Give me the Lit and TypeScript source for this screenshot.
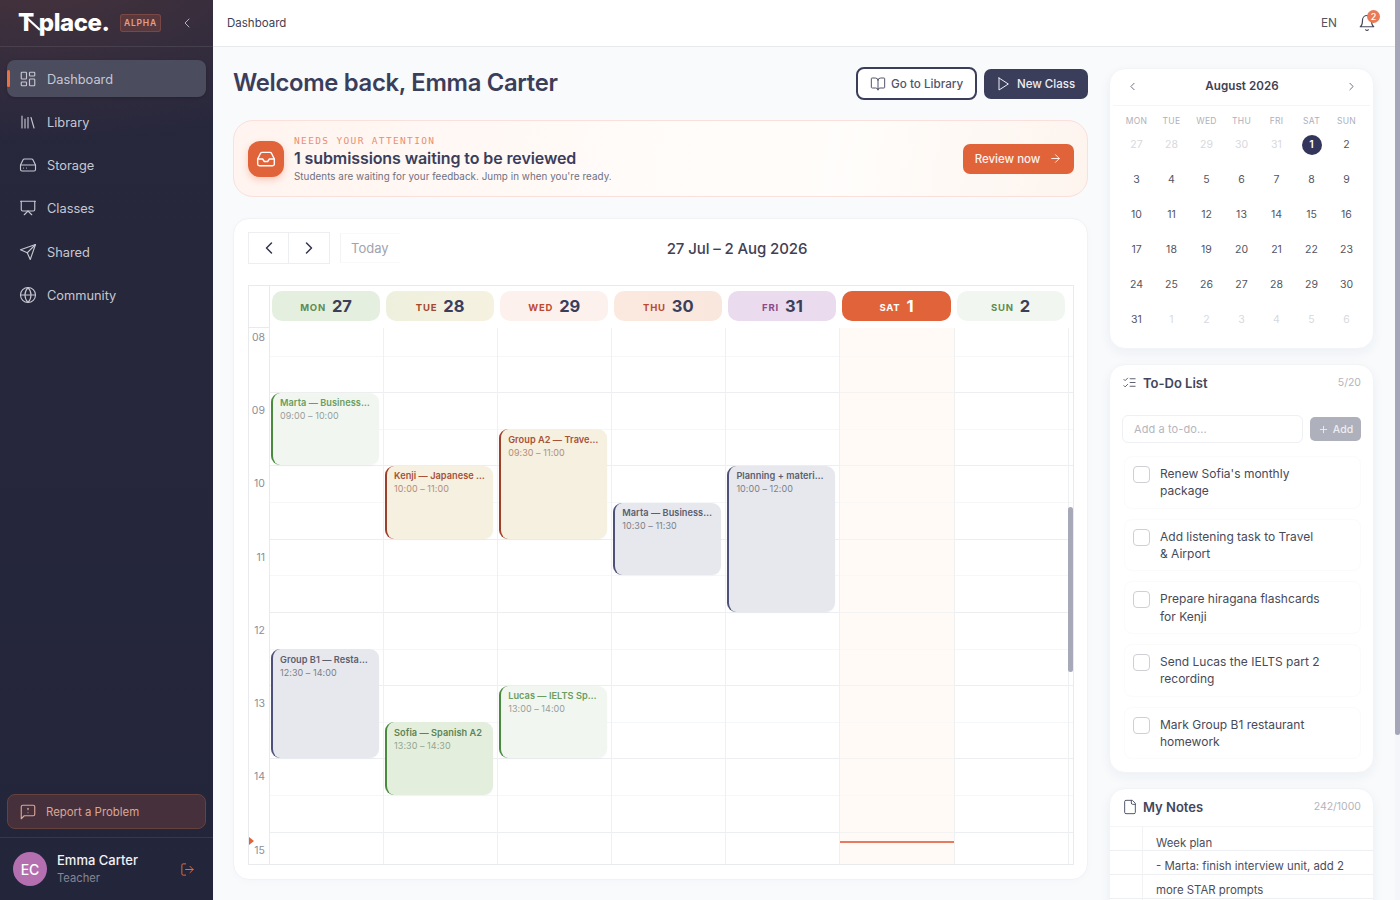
import { LitElement, html, css, svg, nothing } from "lit";
import { customElement } from "lit/decorators.js";

const I = {
  dash: svg`<rect x="3" y="3" width="7" height="9" rx="1"/><rect x="14" y="3" width="7" height="5" rx="1"/><rect x="14" y="12" width="7" height="9" rx="1"/><rect x="3" y="16" width="7" height="5" rx="1"/>`,
  library: svg`<path d="m16 6 4 14"/><path d="M12 6v14"/><path d="M8 8v12"/><path d="M4 4v16"/>`,
  drive: svg`<line x1="22" y1="12" x2="2" y2="12"/><path d="M5.45 5.11 2 12v6a2 2 0 0 0 2 2h16a2 2 0 0 0 2-2v-6l-3.45-6.89A2 2 0 0 0 16.76 4H7.24a2 2 0 0 0-1.79 1.11z"/><line x1="6" y1="16" x2="6.01" y2="16"/><line x1="10" y1="16" x2="10.01" y2="16"/>`,
  present: svg`<path d="M2 3h20"/><path d="M21 3v11a2 2 0 0 1-2 2H5a2 2 0 0 1-2-2V3"/><path d="m7 21 5-5 5 5"/>`,
  send: svg`<path d="m22 2-7 20-4-9-9-4Z"/><path d="M22 2 11 13"/>`,
  globe: svg`<circle cx="12" cy="12" r="10"/><path d="M12 2a14.5 14.5 0 0 0 0 20 14.5 14.5 0 0 0 0-20"/><path d="M2 12h20"/>`,
  report: svg`<path d="M21 15a2 2 0 0 1-2 2H7l-4 4V5a2 2 0 0 1 2-2h14a2 2 0 0 1 2 2z"/><path d="M12 7v2"/><path d="M12 13h.01"/>`,
  logout: svg`<path d="M9 21H5a2 2 0 0 1-2-2V5a2 2 0 0 1 2-2h4"/><path d="m16 17 5-5-5-5"/><path d="M21 12H9"/>`,
  book: svg`<path d="M12 7v14"/><path d="M3 18a1 1 0 0 1-1-1V4a1 1 0 0 1 1-1h5a4 4 0 0 1 4 4 4 4 0 0 1 4-4h5a1 1 0 0 1 1 1v13a1 1 0 0 1-1 1h-6a3 3 0 0 0-3 3 3 3 0 0 0-3-3z"/>`,
  play: svg`<polygon points="6 3 20 12 6 21 6 3"/>`,
  inbox: svg`<polyline points="22 12 16 12 14 15 10 15 8 12 2 12"/><path d="M5.45 5.11 2 12v6a2 2 0 0 0 2 2h16a2 2 0 0 0 2-2v-6l-3.45-6.89A2 2 0 0 0 16.76 4H7.24a2 2 0 0 0-1.79 1.11z"/>`,
  arrow: svg`<path d="M5 12h14"/><path d="m12 5 7 7-7 7"/>`,
  bell: svg`<path d="M6 8a6 6 0 0 1 12 0c0 7 3 9 3 9H3s3-2 3-9"/><path d="M10.3 21a1.94 1.94 0 0 0 3.4 0"/>`,
  checks: svg`<path d="m3 17 2 2 4-4"/><path d="m3 7 2 2 4-4"/><path d="M13 6h8"/><path d="M13 12h8"/><path d="M13 18h8"/>`,
  file: svg`<path d="M15 2H6a2 2 0 0 0-2 2v16a2 2 0 0 0 2 2h12a2 2 0 0 0 2-2V7Z"/><path d="M14 2v4a2 2 0 0 0 2 2h4"/>`,
  plus: svg`<path d="M5 12h14"/><path d="M12 5v14"/>`,
  left: svg`<path d="m15 18-6-6 6-6"/>`,
  right: svg`<path d="m9 18 6-6-6-6"/>`,
};

const ic = (p: unknown, size: number, sw = 2) => html`<svg class="ic" width=${size} height=${size} viewBox="0 0 24 24" fill="none" stroke="currentColor" stroke-width=${sw} stroke-linecap="round" stroke-linejoin="round">${p}</svg>`;

const NAV = [
  ["Dashboard", I.dash, true],
  ["Library", I.library, false],
  ["Storage", I.drive, false],
  ["Classes", I.present, false],
  ["Shared", I.send, false],
  ["Community", I.globe, false],
] as const;

const DAYS = [
  { l: "MON", n: 27, c: "mon" },
  { l: "TUE", n: 28, c: "tue" },
  { l: "WED", n: 29, c: "wed" },
  { l: "THU", n: 30, c: "thu" },
  { l: "FRI", n: 31, c: "fri" },
  { l: "SAT", n: 1, c: "sat" },
  { l: "SUN", n: 2, c: "sun" },
];

const HALF = 36.62;
const EVENTS = [
  { d: 0, s: 9, e: 10, t: "Marta — Business English", time: "09:00 – 10:00", c: "green" },
  { d: 1, s: 10, e: 11, t: "Kenji — Japanese N4 review", time: "10:00 – 11:00", c: "sand" },
  { d: 2, s: 9.5, e: 11, t: "Group A2 — Travel & Airport", time: "09:30 – 11:00", c: "sand" },
  { d: 3, s: 10.5, e: 11.5, t: "Marta — Business English", time: "10:30 – 11:30", c: "slate" },
  { d: 4, s: 10, e: 12, t: "Planning + materials review", time: "10:00 – 12:00", c: "slate" },
  { d: 0, s: 12.5, e: 14, t: "Group B1 — Restaurant", time: "12:30 – 14:00", c: "slate" },
  { d: 1, s: 13.5, e: 14.5, t: "Sofia — Spanish A2", time: "13:30 – 14:30", c: "fresh" },
  { d: 2, s: 13, e: 14, t: "Lucas — IELTS Speaking", time: "13:00 – 14:00", c: "green" },
];

const HOURS = ["08", "09", "10", "11", "12", "13", "14", "15"];
const WEEK = ["MON", "TUE", "WED", "THU", "FRI", "SAT", "SUN"];
const MONTH: [number, boolean][] = [
  ...[27, 28, 29, 30, 31].map((n) => [n, true] as [number, boolean]),
  ...Array.from({ length: 31 }, (_, i) => [i + 1, false] as [number, boolean]),
  ...[1, 2, 3, 4, 5, 6].map((n) => [n, true] as [number, boolean]),
];
const TODOS = [
  "Renew Sofia's monthly package",
  "Add listening task to Travel & Airport",
  "Prepare hiragana flashcards for Kenji",
  "Send Lucas the IELTS part 2 recording",
  "Mark Group B1 restaurant homework",
];

@customElement("app-root")
export class AppRoot extends LitElement {
  static styles = css`
    :host { display: flex; height: 100vh; overflow: hidden; font-family: Inter, "Noto Sans", sans-serif; color: #3b3e5b; background: #f8fafc; }
    * { box-sizing: border-box; }
    .ic { display: block; flex: none; }

    aside { width: 213px; flex: none; height: 100%; display: flex; flex-direction: column; color: #c6c7d1;
      background: radial-gradient(420px 170px at 30px -30px, rgba(150,80,60,.28), transparent 100%), linear-gradient(180deg, #28283c 0%, #23253b 100%); }
    .brand { height: 47px; flex: none; border-bottom: 1px solid rgba(255,255,255,.09); display: flex; align-items: center; padding: 0 18px; position: relative; }
    .logo { width: 102px; flex: none; font-size: 24px; font-weight: 800; color: #fff; letter-spacing: -.45px; line-height: 1; display: flex; position: relative; }
    .logo .t { margin-right: 5px; }
    .logo svg { position: absolute; left: 7px; top: 3px; }
    .alpha { width: 43px; height: 18px; border-radius: 3px; display: flex; align-items: center; justify-content: center; font-size: 8.5px; font-weight: 600; letter-spacing: .8px; color: #e0a08c; background: rgba(200,95,70,.22); border: 1px solid rgba(215,120,95,.26); }
    .collapse { margin-left: 18px; color: #b1b2bd; }
    nav { padding: 13px 7px 0; display: flex; flex-direction: column; gap: 6.3px; flex: 1; }
    .nav { height: 37px; border-radius: 8px; display: flex; align-items: center; gap: 10px; padding-left: 12px; font-size: 12.8px; position: relative; }
    .nav span { margin-top: 1px; }
    .nav.on { background: #4c4c5f; box-shadow: 0 1px 3px rgba(0,0,0,.2); }
    .nav.on::before { content: ""; position: absolute; left: 0; top: 10px; width: 3px; height: 17px; border-radius: 2px; background: #ea7144; }
    .report { margin: 0 7px; height: 35px; border-radius: 8px; background: #45303b; border: 1px solid #66423f; display: flex; align-items: center; gap: 9px; padding-left: 11px; color: #d9a796; font-size: 11.4px; }
    .user { margin-top: 8px; height: 63px; flex: none; border-top: 1px solid rgba(255,255,255,.09); display: flex; align-items: center; padding: 0 18px 0 13px; }
    .avatar { width: 34px; height: 34px; border-radius: 50%; background: #b46fb0; color: #fff; font-size: 14px; font-weight: 500; display: flex; align-items: center; justify-content: center; margin-right: 10px; }
    .uname { color: #f2f2f5; font-size: 13px; font-weight: 500; line-height: 18px; }
    .urole { color: #858694; font-size: 11.2px; line-height: 18px; }
    .out { margin-left: auto; color: #e0693f; }

    main { flex: 1; min-width: 0; height: 100%; overflow: hidden; }
    .sb { width: 5px; flex: none; height: 100%; background: #f5f6fa; }
    .sb div { height: 735px; background: #a5a6ba; border-radius: 0 0 3px 3px; }
    .top { height: 47px; background: #fff; border-bottom: 1px solid #e8e9ed; display: flex; align-items: center; padding: 0 19px 0 14px; font-size: 11.5px; color: #3f4152; }
    .en { margin-left: auto; color: #52545f; margin-right: 21px; font-size: 11.8px; }
    .bell { position: relative; color: #454759; }
    .bell b { position: absolute; left: 9px; top: -4.5px; width: 13px; height: 13px; border-radius: 50%; background: #e97a55; color: #fff; font-size: 9px; font-weight: 500; display: flex; align-items: center; justify-content: center; }

    .page { display: flex; gap: 21px; padding: 20px 21px 20px 20px; align-items: flex-start; }
    .left { width: 855px; flex: none; display: flex; flex-direction: column; }
    .right { width: 265px; flex: none; display: flex; flex-direction: column; gap: 15px; margin-top: 1px; }

    .head { display: flex; align-items: center; height: 33px; gap: 7px; }
    h1 { margin: -3px auto 0 0; font-size: 23.8px; font-weight: 600; letter-spacing: -.3px; color: #3b3e5b; }
    .btn { display: flex; align-items: center; border-radius: 7px; font-size: 11.5px; font-weight: 500; }
    .btn.o { height: 33px; width: 121px; padding-left: 12px; gap: 5px; background: #fff; border: 2px solid #3b3e5b; color: #52546a; border-radius: 8px; font-size: 11.7px; }
    .btn.dk { height: 30px; width: 104px; padding-left: 11px; gap: 6px; background: #3b3e5b; color: #eceef4; }

    .banner { margin-top: 20px; height: 77px; border-radius: 20px; border: 1px solid #fbdfda; background: linear-gradient(100deg, #fff4ef 0%, #fffbf8 45%, #fffdfb 70%, #fdf4ee 100%); display: flex; align-items: center; padding: 0 13px 0 14px; }
    .bi { width: 36px; height: 36px; border-radius: 12px; background: #e0633a; color: #fff; display: flex; align-items: center; justify-content: center; box-shadow: 0 3px 7px rgba(224,99,58,.3); margin-right: 10px; }
    .bt { flex: 1; margin-top: 1px; }
    .eyebrow { font-family: "DejaVu Sans Mono", "Liberation Mono", monospace; font-size: 9.5px; letter-spacing: 1.35px; color: #ea8e70; line-height: 12px; }
    .bh { font-size: 16px; font-weight: 600; letter-spacing: -.1px; line-height: 23px; color: #3b3e5b; }
    .bs { font-size: 9.8px; letter-spacing: .06px; line-height: 13px; color: #6e7080; }
    .review { height: 30px; width: 111px; justify-content: center; gap: 9px; background: #e0633a; color: #fff3ee; }

    .cal { margin-top: 21px; height: 662px; background: #fff; border-radius: 16px; border: 1px solid #f1f2f5; box-shadow: 0 2px 8px rgba(40,50,80,.02); padding: 13px 13px 14px 14px; display: flex; flex-direction: column; }
    .tb { display: flex; justify-content: space-between; align-items: center; height: 32px; flex: none; }
    .tbl { display: flex; align-items: center; width: 152px; }
    .pn { width: 41px; height: 32px; border: 1px solid #eceef1; display: flex; align-items: center; justify-content: center; color: #33364c; }
    .pn + .pn { border-left: none; }
    .today { margin-left: 10px; width: 60px; height: 30px; border-left: 1px solid #f2f3f5; border-top: 1px solid #f9f9fb; border-bottom: 1px solid #f9f9fb; display: flex; align-items: center; padding-left: 10px; font-size: 13px; color: #a1a3ae; }
    .tt { font-size: 15px; font-weight: 500; color: #3f4152; letter-spacing: -.1px; }
    .tbr { width: 0; }
    .grid { margin-top: 21px; flex: 1; border: 1px solid #e9eaee; position: relative; overflow: hidden; display: flex; flex-direction: column; }
    .hdr { display: grid; grid-template-columns: 21px repeat(7, 114.1px) 1fr; height: 42px; flex: none; background: #fff; z-index: 2; }
    .hdr .gut { border-right: 1px solid #e9eaee; border-bottom: 1px solid #e9eaee; }
    .hc { padding: 5px 4px 0 2px; display: flex; }
    .pill { flex: 1; height: 30px; border-radius: 10px; display: flex; align-items: center; justify-content: center; gap: 6px; }
    .pill span { font-size: 9.5px; font-weight: 700; letter-spacing: .8px; margin-top: 3px; }
    .pill b { font-size: 16.5px; font-weight: 700; color: #3b3e5b; }
    .mon { background: #e4efdf; } .mon span { color: #5f8c52; }
    .tue { background: linear-gradient(90deg,#eef0dd,#f6f1e0); } .tue span { color: #a3492f; }
    .wed { background: #fdf1ed; } .wed span { color: #bd4a30; }
    .thu { background: linear-gradient(90deg,#fbe9e0,#f9e6dc); } .thu span { color: #bd4a30; }
    .fri { background: #eadbee; } .fri span { color: #8c4a88; }
    .sat { background: #e0633a; } .sat span, .sat b { color: #fff; }
    .sun { background: #f1f7f0; } .sun span { color: #5f8c52; }
    .body { flex: 1; position: relative; overflow: hidden; }
    .inner { margin-top: -9px; display: grid; grid-template-columns: 21px repeat(7, 114.1px) 1fr; position: relative; }
    .times { border-right: 1px solid #e9eaee; }
    .tl { height: 73.24px; padding-top: 9px; text-align: right; padding-right: 4px; font-size: 10.5px; line-height: 18px; color: #8c8e99; border-top: 1px solid transparent; }
    .col { position: relative; border-right: 1px solid #eef0f2; height: 600px; }
    .col.now { background: #fffaf6; }
    .lines { position: absolute; left: 0; right: 0; top: 0; bottom: 0; background: repeating-linear-gradient(180deg, #eceef1 0, #eceef1 1px, transparent 1px, transparent 36.62px, #f6f7f8 36.62px, #f6f7f8 37.62px, transparent 37.62px, transparent 73.24px); }
    .now .lines { opacity: .55; }
    .ev { position: absolute; left: 1px; right: 4px; border-left: 2.5px solid; border-radius: 9px; padding: 3.5px 7.8px 3.5px 7px; overflow: hidden; box-shadow: 0 1px 2px rgba(40,50,80,.03); }
    .ev .n { font-size: 9.2px; font-weight: 600; letter-spacing: .04px; line-height: 13px; white-space: nowrap; overflow: hidden; text-overflow: ellipsis; }
    .ev .h { font-size: 9px; line-height: 13px; white-space: nowrap; letter-spacing: .05px; }
    .green { background: #f1f7f0; border-color: #4a8a3f; } .green .n { color: #6c9c5e; } .green .h { color: #989d9c; }
    .fresh { background: #e3efdc; border-color: #4a8a3f; } .fresh .n { color: #5e8455; } .fresh .h { color: #93a590; }
    .sand { background: #f5f0df; border-color: #9c402a; } .sand .n { color: #a8503a; } .sand .h { color: #b38d7c; }
    .slate { background: #e6e8ed; border-color: #4d5078; } .slate .n { color: #5c5f70; } .slate .h { color: #7c7f8a; }
    .nowline { position: absolute; left: 0; right: 0; height: 2px; background: #e67a60; z-index: 1; }
    .tri { position: absolute; left: 0; width: 0; height: 0; border-left: 5px solid #e0633a; border-top: 4px solid transparent; border-bottom: 4px solid transparent; z-index: 3; }
    .thumb { position: absolute; right: 0; width: 5px; top: 221px; height: 165px; border-radius: 3px; background: #a8a9b8; z-index: 4; }

    .card { background: #fff; border-radius: 16px; border: 1px solid #f3f4f7; box-shadow: 0 4px 12px rgba(40,50,80,.05); }
    .mini { height: 281px; padding: 0 9px; }
    .mh { height: 37px; margin: 0 -6px; padding: 0 12px 2px 13px; border-bottom: 1px solid #f4f5f7; display: flex; align-items: center; justify-content: space-between; color: #6d6f7c; }
    .mh b { font-size: 11.6px; font-weight: 600; color: #3f4152; letter-spacing: .05px; }
    .mg { display: grid; grid-template-columns: repeat(7, 35px); }
    .wd { height: 21px; padding-top: 9px; display: flex; align-items: center; justify-content: center; font-size: 8.5px; letter-spacing: .3px; color: #aeb0b9; }
    .dc { height: 35px; display: flex; align-items: center; justify-content: center; font-size: 10.5px; color: #53555f; position: relative; }
    .dc.m { color: #d8d9dd; }
    .dc.s { color: #fff; font-weight: 600; }
    .dc.s::before { content: ""; position: absolute; left: 7.5px; top: 7.5px; width: 20px; height: 20px; border-radius: 50%; background: #33365a; }
    .dc i { position: relative; font-style: normal; }

    .todo { height: 409px; padding: 0 12px; }
    .ch { height: 37px; margin-top: -1px; display: flex; align-items: center; gap: 6px; font-size: 13px; font-weight: 600; color: #43465a; }
    .ch .ic { color: #55586a; }
    .ch small { margin-left: auto; font-size: 10.5px; font-weight: 400; color: #b2b4bc; }
    .add { margin-top: 14px; display: flex; align-items: center; gap: 7px; }
    .inp { width: 181px; height: 28px; border: 1px solid #eef0f3; border-radius: 6px; padding-left: 11px; display: flex; align-items: center; font-size: 11px; color: #b4b6be; letter-spacing: .1px; }
    .addb { width: 51px; height: 24px; border-radius: 5px; background: #aeb0bb; color: #eceef2; display: flex; align-items: center; justify-content: center; gap: 4px; font-size: 10.5px; font-weight: 500; }
    .items { margin-top: 13px; display: flex; flex-direction: column; gap: 10.2px; margin-left: 2px; }
    .it { height: 52.5px; border-radius: 8px; border: 1px solid #fbfbfc; display: flex; gap: 10px; padding: 8px 37px 0 8px; font-size: 12px; line-height: 17.4px; color: #474a58; }
    .box { width: 17px; height: 17px; flex: none; border-radius: 4px; border: 1.5px solid #cfd0d6; background: #fff; margin-top: 1px; }

    .notes { height: 294px; overflow: hidden; }
    .notes .ch { padding: 0 12px; gap: 5px; margin-bottom: 1px; }
    .nb { border-top: 1px solid #f5f5f7; height: 256px; position: relative; padding: 5px 12px 0 46px; font-size: 11.4px; line-height: 23.25px; color: #4c4e5b;
      background: repeating-linear-gradient(180deg, transparent 0, transparent 23.2px, #eeeff2 23.2px, #eeeff2 24px); }
    .nb::before { content: ""; position: absolute; left: 32px; top: 0; bottom: 0; width: 1px; background: #f1f2f4; }
  `;

  render() {
    const top = (h: number) => (h - 8) * HALF * 2 + 0.5;
    return html`
      <aside>
        <div class="brand">
          <div class="logo"><span class="t">T</span><span>place.</span>
            <svg width="18" height="18" viewBox="0 0 18 18" fill="none"><path d="M2 4 L15 16" stroke="#fff" stroke-width="2.2"/></svg>
          </div>
          <div class="alpha">ALPHA</div>
          <div class="collapse">${ic(I.left, 16, 1.5)}</div>
        </div>
        <nav>
          ${NAV.map(([t, p, on]) => html`<div class="nav ${on ? "on" : ""}">${ic(p, 18, 1.5)}<span>${t}</span></div>`)}
        </nav>
        <div class="report">${ic(I.report, 18, 1.5)}<span>Report a Problem</span></div>
        <div class="user">
          <div class="avatar">EC</div>
          <div><div class="uname">Emma Carter</div><div class="urole">Teacher</div></div>
          <div class="out">${ic(I.logout, 15, 1.6)}</div>
        </div>
      </aside>
      <main>
        <div class="top">
          <span>Dashboard</span>
          <span class="en">EN</span>
          <div class="bell">${ic(I.bell, 18, 1.6)}<b>2</b></div>
        </div>
        <div class="page">
          <div class="left">
            <div class="head">
              <h1>Welcome back, Emma Carter</h1>
              <div class="btn o">${ic(I.book, 16, 1.5)}<span>Go to Library</span></div>
              <div class="btn dk">${ic(I.play, 16, 1.5)}<span>New Class</span></div>
            </div>
            <div class="banner">
              <div class="bi">${ic(I.inbox, 20, 1.7)}</div>
              <div class="bt">
                <div class="eyebrow">NEEDS YOUR ATTENTION</div>
                <div class="bh">1 submissions waiting to be reviewed</div>
                <div class="bs">Students are waiting for your feedback. Jump in when you're ready.</div>
              </div>
              <div class="btn review"><span>Review now</span>${ic(I.arrow, 13, 1.8)}</div>
            </div>
            <div class="cal">
              <div class="tb">
                <div class="tbl">
                  <div class="pn">${ic(I.left, 20, 1.8)}</div>
                  <div class="pn">${ic(I.right, 20, 1.8)}</div>
                  <div class="today">Today</div>
                </div>
                <div class="tt">27 Jul – 2 Aug 2026</div>
                <div class="tbr"></div>
              </div>
              <div class="grid">
                <div class="hdr">
                  <div class="gut"></div>
                  ${DAYS.map((d) => html`<div class="hc"><div class="pill ${d.c}"><span>${d.l}</span><b>${d.n}</b></div></div>`)}
                  <div></div>
                </div>
                <div class="body">
                  <div class="inner">
                    <div class="times">${HOURS.map((h) => html`<div class="tl">${h}</div>`)}</div>
                    ${DAYS.map((d, i) => html`<div class="col ${d.c === "sat" ? "now" : ""}">
                      <div class="lines"></div>
                      ${EVENTS.filter((e) => e.d === i).map((e) => html`<div class="ev ${e.c}" style="top:${top(e.s)}px;height:${(e.e - e.s) * HALF * 2 - 0.5}px"><div class="n">${e.t}</div><div class="h">${e.time}</div></div>`)}
                      ${d.c === "sat" ? html`<div class="nowline" style="top:${Math.round(top(15.12))}px"></div>` : nothing}
                    </div>`)}
                    <div class="col" style="border-right:none"><div class="lines"></div></div>
                    <div class="tri" style="top:${Math.round(top(15.12)) - 4}px"></div>
                  </div>
                </div>
                <div class="thumb"></div>
              </div>
            </div>
          </div>
          <div class="right">
            <div class="card mini">
              <div class="mh">${ic(I.left, 13, 1.8)}<b>August 2026</b>${ic(I.right, 13, 1.8)}</div>
              <div class="mg">
                ${WEEK.map((w) => html`<div class="wd">${w}</div>`)}
                ${MONTH.map(([n, m]) => html`<div class="dc ${m ? "m" : ""} ${!m && n === 1 ? "s" : ""}"><i>${n}</i></div>`)}
              </div>
            </div>
            <div class="card todo">
              <div class="ch">${ic(I.checks, 15, 1.5)}<span>To-Do List</span><small>5/20</small></div>
              <div class="add">
                <div class="inp">Add a to-do...</div>
                <div class="addb">${ic(I.plus, 11, 2)}<span>Add</span></div>
              </div>
              <div class="items">
                ${TODOS.map((t) => html`<div class="it"><div class="box"></div><div>${t}</div></div>`)}
              </div>
            </div>
            <div class="card notes">
              <div class="ch">${ic(I.file, 16, 1.5)}<span>My Notes</span><small>242/1000</small></div>
              <div class="nb">Week plan<br />- Marta: finish interview unit, add 2<br />more STAR prompts</div>
            </div>
          </div>
        </div>
      </main>
      <div class="sb"><div></div></div>
    `;
  }
}
